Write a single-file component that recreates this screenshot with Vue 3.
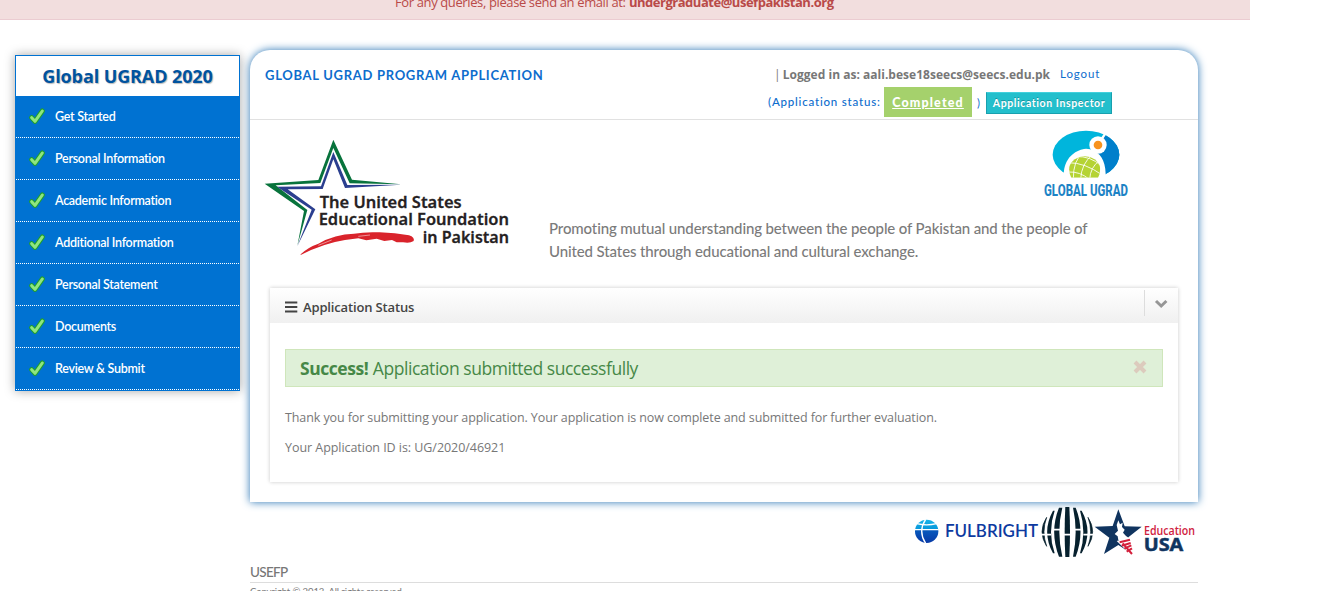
<script setup>
const steps = [
  'Get Started',
  'Personal Information',
  'Academic Information',
  'Additional Information',
  'Personal Statement',
  'Documents',
  'Review & Submit',
]
</script>

<template>
  <div class="page">
    <div class="notice">
      <p><span class="notice-text">For any queries, please send an email at:</span> <b>undergraduate@usefpakistan.org</b></p>
    </div>

    <div class="columns">
      <nav class="sidebar">
        <h1>Global UGRAD 2020</h1>
        <ul>
          <li v-for="step in steps" :key="step">
            <svg class="check" width="16" height="17" viewBox="0 0 48 51" fill="none" stroke-linecap="round" stroke-linejoin="round">
              <path d="M8 29 L18 40 L40 9" stroke="#1f9e2c" stroke-width="15" />
              <path d="M8 29 L18 40 L40 9" stroke="#8fe67f" stroke-width="9" />
            </svg>
            <span class="step">{{ step }}</span>
          </li>
        </ul>
      </nav>

      <div class="content">
        <main class="card">
          <header class="top">
            <h2>GLOBAL UGRAD PROGRAM APPLICATION</h2>
            <div class="account">
              <div class="login">
                <span class="who"><i>|</i> Logged in as: aali.bese18seecs@seecs.edu.pk</span>
                <a class="logout">Logout</a>
              </div>
              <div class="state">
                <span class="label">(Application status:</span>
                <a class="completed">Completed</a>
                <span class="paren">)</span>
                <a class="inspector">Application Inspector</a>
              </div>
            </div>
          </header>

          <section class="brand">
            <svg class="usefp" width="270" height="135" viewBox="0 0 810 405">
              <path fill="#08733c" d="M235 29 L291 149 L438 163 L284 160 L235 54 L196 159 L62 166 L157 240 L127 347 L147 243 L29 161 L190 150 Z" />
              <path fill="#2b3f8f" d="M438 164 L277 165 L235 66 L198 169 L66 170 L170 239 L127 349 L181 238 L98 178 L203 177 L235 88 L270 174 Z" />
              <path fill="#d9232b" d="M137 373 Q158 352 190 341 Q240 312 297 311 Q330 305 374 307 Q420 309 462 316 Q480 322 476 333 Q465 341 444 337 L425 337 L411 330 L388 333 L365 326 L334 331 L310 325 L270 330 Q205 340 137 375 Z" />
              <path stroke="#fff" stroke-width="1.5" fill="none" d="M310 319 L345 315 M190 346 L230 330" />
              <g fill="#252122" stroke="#252122" stroke-width=".8" font-family="'Noto Sans', 'Open Sans', sans-serif" font-weight="600" font-size="48">
                <text x="194" y="234" textLength="426" lengthAdjust="spacingAndGlyphs">The United States</text>
                <text x="191" y="286" textLength="571" lengthAdjust="spacingAndGlyphs">Educational Foundation</text>
                <text x="503" y="340" textLength="259" lengthAdjust="spacingAndGlyphs">in Pakistan</text>
              </g>
            </svg>
            <p class="motto"><span class="m1">Promoting mutual understanding between the people of Pakistan and the people of</span><br><span class="m2">United States through educational and cultural exchange.</span></p>
            <svg class="ugrad" width="140" height="85" viewBox="0 0 420 255">
              <defs>
                <clipPath id="oval"><ellipse cx="198" cy="104" rx="100" ry="72" /></clipPath>
                <clipPath id="land"><path d="M154 173 Q146 158 148 141 A47 41 0 0 1 240 141 Q242 160 234 173 Z" /></clipPath>
              </defs>
              <g clip-path="url(#oval)">
                <rect x="90" y="25" width="220" height="150" fill="#00b5dc" />
                <path d="M258 34 L248 62 L250 90 L225 105 L258 170 L310 170 L310 30 Z" fill="#007fcb" />
              </g>
              <path d="M133 178 C127 148 138 98 192 87 Q208 85 222 93 C247 105 259 130 257 178 Z" fill="#fff" />
              <circle cx="234" cy="75" r="26" fill="#fff" />
              <path d="M243 60 L260 35" stroke="#fff" stroke-width="7" />
              <circle cx="234" cy="75" r="13" fill="#f7931e" />
              <g clip-path="url(#land)">
                <rect x="140" y="95" width="110" height="84" fill="#b5d334" />
                <g fill="none" stroke="#fff" stroke-width="2.6">
                  <path d="M145 128 Q195 128 245 164 M145 156 Q180 154 208 178 M168 110 Q210 107 245 138" />
                  <path d="M190 98 Q159 120 160 178 M218 104 Q184 130 182 178 M238 122 Q211 142 209 178" />
                </g>
              </g>
              <text x="72" y="227" textLength="252" lengthAdjust="spacingAndGlyphs" font-family="Roboto, sans-serif" font-weight="800" font-size="49" fill="#1d83c5">GLOBAL UGRAD</text>
            </svg>
          </section>

          <section class="panel">
            <div class="panel-head">
              <svg width="13" height="12" viewBox="0 0 13 12"><path d="M0 1.5H12.3M0 6H12.3M0 10.5H12.3" stroke="#444" stroke-width="2" /></svg>
              <h3>Application Status</h3>
              <div class="toggle">
                <svg width="14" height="10" viewBox="0 0 14 10"><path d="M2 2 L7.2 7 L12.4 2" fill="none" stroke="#969696" stroke-width="3" /></svg>
              </div>
            </div>
            <div class="panel-body">
              <div class="alert">
                <p><b>Success!</b> <span>Application submitted successfully</span></p>
                <svg width="14" height="14" viewBox="0 0 14 14"><path d="M2 2 L12 12 M12 2 L2 12" stroke="#dccbbd" stroke-width="4" /></svg>
              </div>
              <p class="thanks">Thank you for submitting your application. Your application is now complete and submitted for further evaluation.</p>
              <p class="appid">Your Application ID is: UG/2020/46921</p>
            </div>
          </section>
        </main>

        <footer>
          <svg class="partners" width="310" height="58" viewBox="0 36 930 174">
            <defs>
              <linearGradient id="sea" x1="0" y1="0" x2="0" y2="1">
                <stop offset="0" stop-color="#18b4e8" /><stop offset=".38" stop-color="#0799dc" />
                <stop offset=".45" stop-color="#0759bd" /><stop offset="1" stop-color="#083aa6" />
              </linearGradient>
            </defs>
            <circle cx="80" cy="124" r="35" fill="url(#sea)" />
            <g fill="none" stroke="#fff" stroke-width="4">
              <path d="M44 119 H116 M50 101 Q80 108 110 101" stroke-width="3.5" /><path d="M77 88 Q53 124 77 160" />
            </g>
            <text x="135" y="141" textLength="279" lengthAdjust="spacingAndGlyphs" font-family="Lato, sans-serif" font-weight="600" font-size="49" fill="#0d3aa0">FULBRIGHT</text>
            <g fill="#07212e">
              <path d="M440 82 Q412 125 440 169 Q424 125 440 82 Z" stroke="#07212e" stroke-width="2" />
              <path d="M459 62 L464 62 Q442 125 464 190 L459 190 Q424 125 459 62 Z" />
              <path d="M477 53 L487 53 Q469 125 487 200 L477 200 Q448 125 477 53 Z" />
              <path d="M496 51 H508 Q512 125 508 201 H496 Q492 125 496 51 Z" />
              <path d="M519 53 L527 53 Q556 125 527 200 L519 200 Q535 125 519 53 Z" />
              <path d="M540 62 L545 62 Q580 125 545 190 L540 190 Q560 125 540 62 Z" />
              <path d="M564 82 Q592 125 564 169 Q580 125 564 82 Z" stroke="#07212e" stroke-width="2" />
            </g>
            <path stroke="#fff" stroke-width="5" d="M458 119 H484 M490 134 H514 M520 119 H546 M422 134 H453 M550 134 H582" />
            <path fill="#10345f" d="M655 58 L674 109 L725 110 L685 142 L697 192 L655 165 L612 192 L628 143 L584 110 L638 108 Z" />
            <path fill="#fff" d="M655 91 L660 103 L668 98 L666 111 L674 119 L669 128 L678 138 L690 146 L676 151 L665 158 L655 150 L653 139 L644 132 L654 122 L650 105 Z" />
            <path fill="#fff" d="M650 153 L690 142 L702 190 L694 196 Z" />
            <path fill="none" stroke="#d41f3b" stroke-width="6" d="M659 157 L690 149 M665 167 L692 159 M673 176 L694 166 M680 185 L696 175 M668 160 L696 192" />
            <text x="732" y="135" textLength="153" lengthAdjust="spacingAndGlyphs" font-family="'Open Sans', sans-serif" font-weight="600" font-size="36" fill="#cf203d">Education</text>
            <text x="731" y="183" textLength="119" lengthAdjust="spacingAndGlyphs" font-family="'Open Sans', sans-serif" font-weight="700" font-size="55" fill="#10345f" stroke="#10345f" stroke-width="1.5">USA</text>
          </svg>
          <h4>USEFP</h4>
          <p class="copyright">Copyright © 2013. All rights reserved.</p>
        </footer>
      </div>
    </div>
  </div>
</template>

<style>
html, body { margin: 0; overflow: hidden; background: #fff; }
</style>

<style scoped>
.page { width: 1337px; height: 591px; overflow: hidden; font-family: 'Open Sans', 'Noto Sans', sans-serif; color: #777; }
p, h1, h2, h3, h4, ul { margin: 0; padding: 0; font-weight: normal; white-space: nowrap; }
svg { display: block; flex: none; }
.notice { box-sizing: border-box; width: 1250px; height: 20px; overflow: hidden; background: #f2dede; border-bottom: 1px solid #ebccd1; color: #b94a48; }
.notice p { margin: -8px 0 0 395px; font-size: 13px; line-height: 20px; }
.notice-text { letter-spacing: -.38px; }
.notice b { letter-spacing: -.48px; }
.columns { display: flex; padding-left: 15px; }
.sidebar { box-sizing: border-box; width: 225px; height: 336px; margin-top: 35px; border: 1px solid #0072d2; background: #0072d2; box-shadow: 0 0 10px rgba(0, 0, 0, .35); }
.sidebar h1 { height: 40px; background: #fff; color: #00539f; font-size: 18px; line-height: 41px; font-weight: 700; text-align: center; text-shadow: 1px 1px 1px #bbb; letter-spacing: -.1px; }
.sidebar li { box-sizing: border-box; display: flex; align-items: center; height: 42px; padding-left: 13px; border-bottom: 1px dotted #fff; list-style: none; color: #fff; }
.step { margin: 1px 0 0 10px; font: 600 12.5px/20px Lato, sans-serif; letter-spacing: -.28px; }
.content { width: 948px; margin: 30px 0 0 10px; }
.card { height: 452px; border-radius: 20px 20px 0 0; background: #fff; box-shadow: 0 0 8px #2a75b5; }
.top { box-sizing: border-box; display: flex; justify-content: space-between; height: 70px; border-bottom: 1px solid #e1e1e1; }
.top h2 { margin: 15px 0 0 15px; color: #0d6dcd; font: 700 13px/20px Lato, sans-serif; letter-spacing: .7px; }
.account { width: 430px; }
.login { display: flex; height: 20px; margin: 14px 0 0 6px; line-height: 20px; }
.who { width: 286px; font-size: 12px; font-weight: 700; letter-spacing: .02px; line-height: 22px; }
.who i { margin-right: -1px; font-style: normal; font-weight: 400; }
.logout { color: #0d6dcd; font-family: Lato, sans-serif; font-size: 11.5px; letter-spacing: .9px; }
.state { display: flex; margin-top: 3px; height: 30px; color: #0d6dcd; font-family: Lato, sans-serif; }
.label { width: 116px; font-size: 11.5px; line-height: 30px; letter-spacing: .8px; font-weight: 500; }
.completed { width: 88px; background: #a5d16c; color: #fff; font-size: 12.5px; line-height: 31px; font-weight: 900; text-align: center; text-decoration: underline; letter-spacing: 1.15px; }
.paren { width: 14px; text-indent: 5px; font-size: 11px; line-height: 31px; }
.inspector { box-sizing: border-box; width: 126px; height: 22px; margin-top: 5px; border: 1px solid #18a0ae; border-top-color: #43d0dc; background: #23bfcc; color: #fff; font-size: 10.5px; line-height: 21px; font-weight: 700; text-align: center; letter-spacing: .6px; text-shadow: 0 -1px 0 rgba(0, 0, 0, .25); }
.brand { display: flex; height: 167px; }
.usefp { margin: 10px 0 0 5px; }
.motto { width: 495px; margin: 97px 0 0 24px; font: 500 15px/23px Lato, sans-serif; color: #7b7b7b; }
.m1 { letter-spacing: -.13px; }
.m2 { letter-spacing: -.12px; }
.ugrad { margin-left: -24px; }
.panel { box-sizing: border-box; width: 908px; height: 194px; margin: 1px 0 0 20px; background: #fff; box-shadow: 0 0 4px rgba(0, 0, 0, .22); }
.panel-head { display: flex; align-items: center; height: 35px; padding-left: 15px; background: linear-gradient(#fff, #f0f0f0); color: #444; }
.panel-head > svg { margin-top: 3px; }
.panel-head h3 { margin: 2px 0 0 5px; font-size: 13px; line-height: 20px; font-weight: 600; letter-spacing: -.15px; }
.toggle { box-sizing: border-box; width: 34px; height: 26px; margin: -5px 0 0 auto; border-left: 1px solid #ddd; padding: 9px 0 0 9px; }
.panel-body { padding: 26px 15px 0; }
.alert { box-sizing: border-box; display: flex; justify-content: space-between; width: 878px; height: 38px; padding: 0 15px 0 14px; border: 1px solid #cfe6bb; background: #dff0d8; color: #468847; font-size: 17.5px; line-height: 37px; }
.alert b { letter-spacing: -.45px; }
.alert span { letter-spacing: -.45px; }
.alert svg { margin-top: 10px; }
.thanks, .appid { font-size: 12.5px; line-height: 20px; }
.thanks { margin-top: 21px; letter-spacing: -.1px; }
.appid { margin-top: 10px; letter-spacing: -.05px; }
.partners { margin-left: 650px; }
footer h4 { height: 22px; font: 500 13.5px/24px Lato, sans-serif; border-bottom: 1px solid #ddd; letter-spacing: -.7px; }
.copyright { font: 9.5px/18px Lato, sans-serif; letter-spacing: -.1px; }
</style>
